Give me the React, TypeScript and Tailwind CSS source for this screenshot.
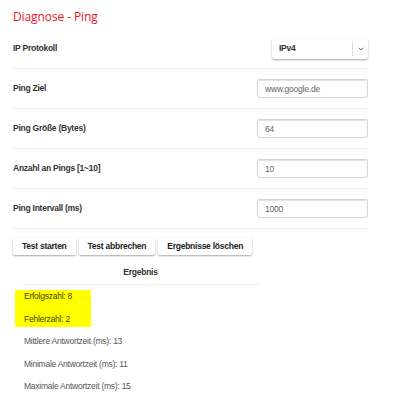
import { ChevronDown } from "lucide-react";

const Row = ({ label, children }: { label: string; children: React.ReactNode }) => {
  return (
    <div className="flex h-[40px] items-center justify-between border-b border-[#eeeeee]">
      <span className="text-[8.5px] font-bold tracking-[-0.25px] text-[#333333]">{label}</span>
      {children}
    </div>
  );
};

const Field = ({ value }: { value: string }) => {
  return (
    <input
      readOnly
      value={value}
      className="h-[19px] w-[111px] rounded-[2px] border border-[#d4d4d4] px-[7px] text-[8.5px] tracking-[-0.2px] text-[#666666] shadow-[inset_0_1px_1px_rgba(0,0,0,0.12)] outline-none"
    />
  );
};

const Btn = ({ title }: { title: string }) => {
  return (
    <button className="h-[17px] rounded-[2px] bg-white px-[9px] text-[8.5px] font-bold tracking-[-0.25px] text-[#222222] shadow-[0_1px_2px_rgba(0,0,0,0.35)]">
      {title}
    </button>
  );
};

export default function App() {
  return (
    <div className="h-[399px] w-[400px] bg-white pl-[13px] font-['Liberation_Sans',Arial,sans-serif]">
      <div className="w-[355px]">
        <h1 className="h-[29px] pt-[8px] font-['Open_Sans',sans-serif] text-[12px] leading-[18px] tracking-[-0.1px] text-[#e3141e]">
          Diagnose - Ping
        </h1>
        <Row label="IP Protokoll">
          <div className="flex h-[20px] w-[96px] items-center rounded-[2px] bg-white shadow-[0_1px_2px_rgba(0,0,0,0.35)]">
            <span className="flex-1 pl-[7px] text-[8.5px] font-bold tracking-[-0.25px] text-[#333333]">IPv4</span>
            <span className="flex h-[14px] w-[16px] items-center justify-center border-l border-[#dddddd]">
              <ChevronDown size={8} strokeWidth={2.5} color="#555" />
            </span>
          </div>
        </Row>
        <Row label="Ping Ziel">
          <Field value="www.google.de" />
        </Row>
        <Row label="Ping Größe (Bytes)">
          <Field value="64" />
        </Row>
        <Row label="Anzahl an Pings [1~10]">
          <Field value="10" />
        </Row>
        <Row label="Ping Intervall (ms)">
          <Field value="1000" />
        </Row>
        <div className="mt-[9px] flex gap-[3px]">
          <Btn title="Test starten" />
          <Btn title="Test abbrechen" />
          <Btn title="Ergebnisse löschen" />
        </div>
        <div className="ml-[10px] mt-[12px] w-[235px] border-b border-[#eeeeee] pb-[6px] text-center text-[8.5px] font-bold leading-[11px] tracking-[-0.25px] text-[#333333]">
          Ergebnis
        </div>
        <div className="text-[8.5px] leading-[11px] tracking-[-0.25px] text-[#555555]">
          <div className="ml-[2px] mt-[5px] w-[76px] bg-[#ffff00] pb-[2px] pl-[9px] pt-[1px] text-[#444400]">
            <div>Erfolgszahl: 8</div>
            <div className="mt-[12px]">Fehlerzahl: 2</div>
          </div>
          <div className="pl-[11px]">
            <div className="mt-[9px]">Mittlere Antwortzeit (ms): 13</div>
            <div className="mt-[12px]">Minimale Antwortzeit (ms): 11</div>
            <div className="mt-[11px]">Maximale Antwortzeit (ms): 15</div>
          </div>
        </div>
      </div>
    </div>
  );
}
